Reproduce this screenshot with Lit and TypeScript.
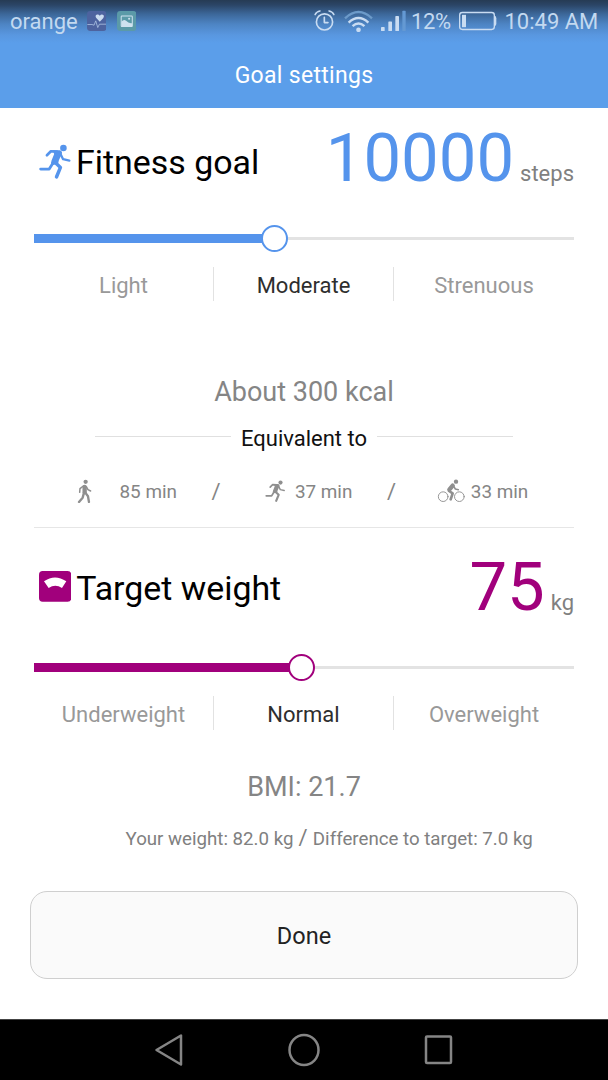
import { LitElement, html, css, svg } from "lit";
import { customElement, property } from "lit/decorators.js";

const runner = svg`
  <circle cx="131" cy="83" r="10" fill="currentColor"/>
  <path d="M98 90 L120 90 Q129 93 126 101 L117 121 L115 131 L97 135 Q91 128 95 121 L103 101Z" fill="currentColor"/>
  <g fill="none" stroke="currentColor" stroke-linecap="round" stroke-linejoin="round">
    <path d="M81 105 L93 93 L112 94" stroke-width="8"/>
    <path d="M120 97 L130 117 L149 121" stroke-width="7"/>
    <path d="M106 127 L122 142 L110 171" stroke-width="10.500"/>
    <path d="M98 131 L88 147 L62 147" stroke-width="8.500"/>
  </g>`;

@customElement("goal-slider")
class GoalSlider extends LitElement {
  @property({ type: Number }) value = 0;

  static styles = css`
    :host { display: grid; grid-template: 30px / 540px; align-items: center; }
    .track, .fill, .thumb { grid-area: 1 / 1; }
    .track { height: 3px; background: #e3e3e3; }
    .fill { height: 9px; background: currentColor; }
    .lead { grid-area: 1 / 1; display: flex; justify-content: flex-end; }
    .thumb { box-sizing: border-box; width: 27px; height: 27px; margin-right: -13.5px; flex: none;
      border: 2.5px solid currentColor; border-radius: 50%; background: #fff; }
  `;

  render() {
    return html`
      <div class="track"></div>
      <div class="fill" style="width:${this.value}px"></div>
      <div class="lead" style="width:${this.value}px"><div class="thumb"></div></div>`;
  }
}

@customElement("app-root")
class AppRoot extends LitElement {
  static styles = css`
    :host { display: flex; flex-direction: column; width: 608px; height: 1080px; overflow: hidden;
      background: #fff; font-family: Roboto, "Noto Sans", sans-serif; white-space: nowrap; }
    svg { display: block; flex: none; }
    header { height: 108px; background: linear-gradient(#263b54 0, #2b4566 5px, #3c6799 14px, #4d84c3 24px, #5997e0 35px, #5b9eea 43px); }
    .status { display: flex; align-items: center; height: 42px; padding: 0 11px 0 10px; box-sizing: border-box;
      color: #c3d9f0; font-size: 22px; }
    .carrier { width: 76.6px; font-size: 22px; }
    .app { margin-right: 10.5px; }
    .alarm { margin-left: auto; margin-right: 8.5px; }
    .wifi { margin-right: 8px; }
    .signal { margin-right: 5.5px; }
    .pct { width: 47.5px; font-size: 22px; letter-spacing: -0.4px; }
    .clock { width: 92.500px; margin-left: 8px; }
    .title { display: flex; justify-content: center; align-items: center; height: 66px; color: #fff; font-size: 23px; letter-spacing: 0.3px; }
    main { flex: 1; padding: 0 34px; }
    .head { display: flex; align-items: center; height: 100px; }
    .name { display: flex; align-items: center; gap: 4px; padding: 9px 0 0 5px; font-size: 33.9px; color: #000; }
    .amount { margin-left: auto; display: flex; align-items: baseline; gap: 6px; font-size: 67px; }
    .unit { font-size: 22px; color: #808080; }
    .blue { color: #5594ec; }
    .plum { color: #a1007c; }
    goal-slider { margin-top: 15px; }
    .levels { display: grid; grid-template-columns: 179px 180px 181px; height: 34px; margin-top: 14px;
      font-size: 22px; line-height: 37px; text-align: center; color: #999; }
    .levels span { height: 34px; }
    .levels span + span { border-left: 1px solid #e2e2e2; }
    .levels .on { color: #2e2e2e; }
    .big { margin-top: 71px; height: 40px; line-height: 40px; text-align: center; font-size: 27px; color: #858585; }
    .equiv { display: flex; align-items: center; gap: 10px; height: 30px; margin: 11px 61px 0; font-size: 22px; color: #111; }
    .equiv i { flex: 1; height: 1px; margin-top: -3px; background: #e0e0e0; }
    .acts { display: grid; grid-template-columns: 42.5px 92px 53.200px 30.200px 92.100px 50px 33.800px auto; align-items: center; height: 30px; margin-top: 23px; padding-left: 43px; font-size: 18.9px; color: #858585; }
    .acts svg { color: #8f8f8f; }
    .acts .slash { font-size: 22px; }
    .rule { height: 1px; margin-top: 21px; background: #e6e6e6; }
    .second .head { margin-top: 9px; }
    .second .name { padding-top: 2px; gap: 5px; }
    .scale { margin-bottom: 3px; }
    .bmi { margin-top: 37px; }
    .note { margin-top: 16px; height: 30px; line-height: 30px; padding-left: 91.5px; font-size: 18.7px; color: #808080; }
    .note span { font-size: 22px; margin: 0 0.5px; }
    .done { box-sizing: border-box; display: flex; align-items: center; justify-content: center; width: 548px; height: 88px; margin: 38px 0 0 -4px; padding: 2px 0 0;
      border: 1px solid #cfcfcf; border-radius: 17px; background: #fafafa; font: 23.5px Roboto, sans-serif; color: #222; }
    nav { display: flex; align-items: center; height: 60px; border-top: 1px solid #444; background: #000; padding-left: 154px; gap: 104px; }
  `;

  render() {
    return html`
      <header>
        <div class="status">
          <span class="carrier">orange</span>
          <svg class="app" width="19.5" height="20" viewBox="260 31 58 59"><rect x="260" y="31" width="58" height="59" rx="10" fill="#4d639f"/><path d="M298 63 L287 51 Q283 43 290 41 Q295 40 298 45 Q302 40 307 42 Q313 45 308 52Z" fill="#cbdcf0"/><path d="M261 71 H275 L281 73 L286 60 L292 80 L297 70 H317" fill="none" stroke="#a9bfe0" stroke-width="2.5" stroke-linejoin="round"/></svg>
          <svg width="19.5" height="20" viewBox="351 31 58 59"><rect x="351" y="31" width="58" height="59" rx="10" fill="#5b9aa8"/><rect x="363.500" y="45.500" width="33" height="31" rx="2" fill="none" stroke="#cfe2f0" stroke-width="3"/><path d="M364 63 Q371 54 378 60 Q386 69 396 67 V77 H364Z" fill="#cfe2f0"/><circle cx="387" cy="54" r="3" fill="#cfe2f0"/></svg>
          <svg class="alarm" width="21" height="21.500" viewBox="31 29 63 65" fill="none" stroke="#c9dcf2" stroke-linecap="round" stroke-linejoin="round"><circle cx="62.500" cy="65" r="24.500" stroke-width="5"/><path d="M62 51 V67 H73" stroke-width="5"/><path d="M34 43 Q38 34 49 32 M76 32 Q87 34 91 43" stroke-width="4.500"/></svg>
          <svg class="wifi" width="29" height="22.500" viewBox="120 27 88 68" fill="none" stroke="#c9dcf2" stroke-linecap="butt"><path d="M123 52 Q164 14 205 52" stroke-width="7" stroke="#6c9ac9"/><path d="M134 65 Q164 37 194 65" stroke-width="7.500"/><path d="M146 76 Q164 60 182 76" stroke-width="7.500"/><circle cx="164" cy="87" r="7" fill="#c9dcf2" stroke="none"/></svg>
          <svg class="signal" width="25" height="21.500" viewBox="232 28 75 64" fill="#c9dcf2"><rect x="232" y="79" width="11" height="12" rx="2"/><rect x="254" y="62" width="11" height="29" rx="2"/><rect x="275" y="46" width="11" height="45" rx="2"/><rect x="296" y="30" width="10" height="61" rx="2" fill="#6499d3"/></svg>
          <span class="pct">12%</span>
          <svg width="38" height="20" viewBox="465 34 114 59"><rect x="467" y="38" width="104" height="51" rx="8" fill="none" stroke="#c9dcf2" stroke-width="4"/><rect x="474" y="45" width="12" height="37" fill="#c9dcf2"/><path d="M572 48 Q577 49 577 55 V72 Q577 78 572 79Z" fill="#c9dcf2"/></svg>
          <span class="clock">10:49 AM</span>
        </div>
        <div class="title">Goal settings</div>
      </header>
      <main>
        <section>
          <div class="head">
            <div class="name"><svg class="blue" width="33" height="37" viewBox="57 72 100 110">${runner}</svg><span>Fitness goal</span></div>
            <div class="amount blue">10000<span class="unit">steps</span></div>
          </div>
          <goal-slider class="blue" .value=${240}></goal-slider>
          <div class="levels"><span>Light</span><span class="on">Moderate</span><span>Strenuous</span></div>
          <div class="big">About 300 kcal</div>
          <div class="equiv"><i></i>Equivalent to<i></i></div>
          <div class="acts">
            <svg width="15.300" height="24.300" viewBox="52 25 46 73"><circle cx="78" cy="33.500" r="6.500" fill="currentColor"/><g fill="none" stroke="currentColor" stroke-linecap="round" stroke-linejoin="round"><path d="M75 49 V65" stroke-width="13"/><path d="M71 46 L61 54 L60 65 M80 48 L85 57 L93 61" stroke-width="4.500"/><path d="M73 66 L69 81 L58 94 M77 66 L85 77 L88 94" stroke-width="7"/></g></svg>
            <span>85 min</span><span class="slash">/</span>
            <svg width="20.700" height="23" viewBox="56 71 100 110">${runner}</svg>
            <span>37 min</span><span class="slash">/</span>
            <svg width="28.700" height="24" viewBox="410 26 86 72"><g fill="none" stroke="currentColor" stroke-linecap="round" stroke-linejoin="round"><circle cx="428.500" cy="79" r="14.500" stroke-width="2.800"/><circle cx="477" cy="79" r="14.500" stroke-width="2.800"/><path d="M457 46 L447 58" stroke-width="13"/><path d="M459 46 L465 56 L474 58" stroke-width="4.500"/><path d="M446 62 L457 69 L451 87" stroke-width="8"/></g><circle cx="467" cy="34" r="6.500" fill="currentColor"/></svg>
            <span>33 min</span>
          </div>
          <div class="rule"></div>
        </section>
        <section class="second">
          <div class="head">
            <div class="name"><svg class="plum scale" width="32.300" height="30.700" viewBox="58 64 97 92"><rect x="58" y="64" width="97" height="92" rx="11" fill="currentColor"/><path d="M73 95 Q106 72 140 95 L127 115 Q107 102 87 115Z" fill="#fff"/></svg><span>Target weight</span></div>
            <div class="amount plum">75<span class="unit">kg</span></div>
          </div>
          <goal-slider class="plum" .value=${267.5}></goal-slider>
          <div class="levels"><span>Underweight</span><span class="on">Normal</span><span>Overweight</span></div>
          <div class="big bmi">BMI: 21.7</div>
          <div class="note">Your weight: 82.0 kg <span>/</span> Difference to target: 7.0 kg</div>
          <button class="done">Done</button>
        </section>
      </main>
      <nav>
        <svg width="30" height="34" viewBox="0 0 30 34"><path d="M27 2.500 V31.500 L2.500 17Z" fill="none" stroke="#858585" stroke-width="2.500" stroke-linejoin="round"/></svg>
        <svg width="32" height="34" viewBox="0 0 32 34"><ellipse cx="16" cy="17" rx="14.500" ry="15" fill="none" stroke="#858585" stroke-width="2.500"/></svg>
        <svg width="30" height="34" viewBox="0 0 30 34"><rect x="2" y="3.500" width="25" height="26.500" rx="1" fill="none" stroke="#858585" stroke-width="2.500"/></svg>
      </nav>`;
  }
}
